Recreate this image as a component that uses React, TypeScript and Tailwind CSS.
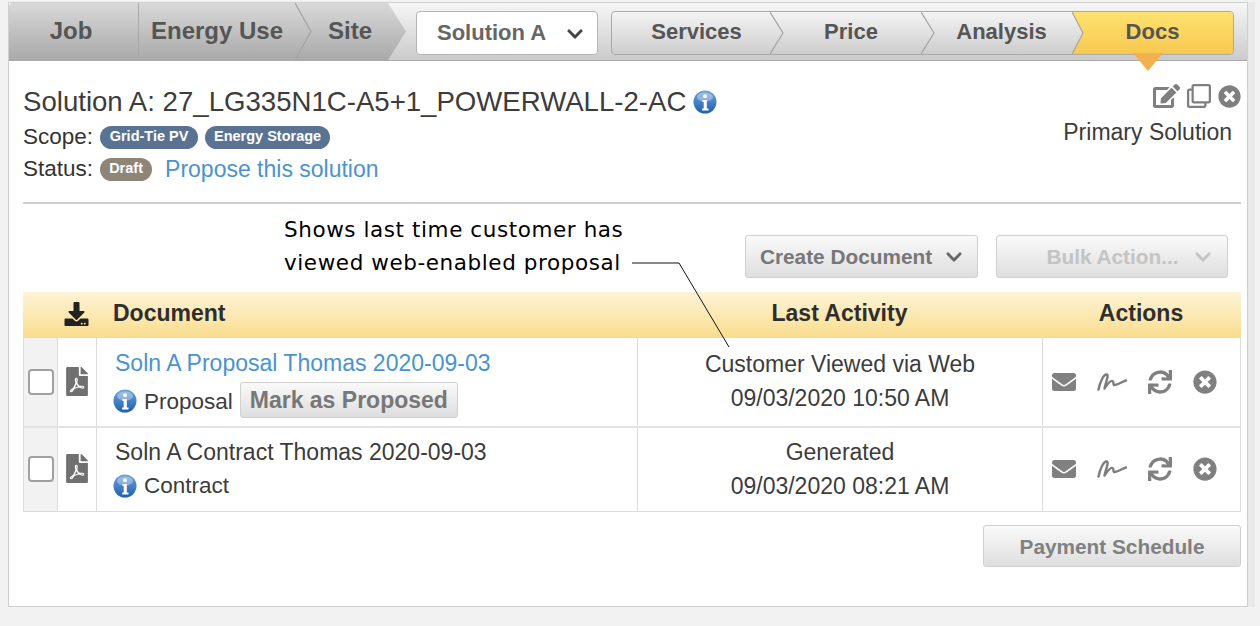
import { FaEdit, FaRegClone, FaTimesCircle, FaEnvelope, FaSync, FaFilePdf, FaDownload, FaChevronDown } from "react-icons/fa";

function Info({ size = 24 }: { size?: number }) {
  return (
    <svg width={size} height={size} viewBox="0 0 24 24" className="shrink-0">
      <defs>
        <linearGradient id="infoG" x1="0" y1="0" x2="0" y2="1">
          <stop offset="0" stopColor="#6fa3dc" />
          <stop offset="1" stopColor="#1f5fb0" />
        </linearGradient>
      </defs>
      <circle cx="12" cy="12" r="11.5" fill="url(#infoG)" />
      <ellipse cx="12" cy="7" rx="8" ry="4.5" fill="#ffffff" opacity="0.35" />
      <circle cx="12" cy="6.2" r="2" fill="#fff" />
      <path d="M9.5 10h4.3v8.6h1.7v2h-6.4v-2h1.6v-6.6H9.5z" fill="#fff" />
    </svg>
  );
}

function Chevron({ color = "#a5a5a5", w = 18 }: { color?: string; w?: number }) {
  return (
    <svg className="absolute top-0 left-full z-10 h-full" width={w} viewBox={`0 0 ${w} 44`} preserveAspectRatio="none">
      <path d={`M0 0L${w - 1} 22L0 44`} fill="none" stroke={color} strokeWidth="1.2" />
    </svg>
  );
}

function Signature() {
  return (
    <svg width="30" height="18" viewBox="0 0 30 18" fill="none">
      <path d="M1.5 16.5C3 9 6.5 1.5 9.5 1.5C12.5 1.5 8.5 10 7.5 15.5C10.5 11 13.5 7 15.5 8C17.5 9 15.5 12 17.5 12C20.5 12 24.5 9 29 7.5" stroke="#7d7d7d" strokeWidth="2.4" strokeLinecap="round" strokeLinejoin="round" />
    </svg>
  );
}

function Actions({ className }: { className: string }) {
  return (
    <div className={"flex items-center pl-[9px] text-[#808080] " + className}>
      <FaEnvelope className="w-6 h-[24px]" />
      <span className="ml-[21px] flex"><Signature /></span>
      <FaSync className="ml-[21px] w-6 h-6" />
      <FaTimesCircle className="ml-[21px] w-6 h-6" />
    </div>
  );
}

function Check() {
  return <div className="w-[26px] h-[26px] rounded-[4px] border-2 border-[#a0a0a0] bg-white" />;
}

function Button({ children, className }: { children: React.ReactNode; className: string }) {
  return (
    <div className={"flex items-center justify-center rounded-[3px] border border-[#d0d0d0] bg-gradient-to-b from-[#fafafa] to-[#dedede] font-bold text-[20.8px] " + className}>
      {children}
    </div>
  );
}

const tabFont = "flex items-center justify-center font-bold text-[#555]";

export default function App() {
  return (
    <div className="w-[1260px] h-[626px] overflow-hidden bg-[#f2f2f2] pt-[2px] pl-[8px] text-[#333] font-['Liberation_Sans',Arial,sans-serif]">
      <div className="w-[1240px] h-[605px] border border-[#cfcfcf] bg-white shadow-[7px_0_0_0_#e9e9e9]">
        {/* nav */}
        <div className="relative flex h-[58px] border-b border-[#a9a9a9] rounded-t-[4px] bg-gradient-to-b from-[#f6f6f6] to-[#cbcbcb]">
          <div className={tabFont + " text-[24px] pb-[2px] w-[130px] pr-[5px] border-r border-[#a8a8a8] rounded-tl-[4px] bg-gradient-to-b from-[#d9d9d9] to-[#a9a9a9]"}>Job</div>
          <div className={tabFont + " text-[24px] pb-[2px] relative w-[156px] bg-gradient-to-b from-[#d9d9d9] to-[#a9a9a9]"}>
            Energy Use
            <Chevron w={17} />
          </div>
          <div className={tabFont + " text-[24px] pb-[2px] w-[111px] pr-[1px] bg-gradient-to-b from-[#d9d9d9] to-[#a9a9a9] [clip-path:polygon(0_0,93px_0,100%_50%,93px_100%,0_100%)]"}>Site</div>
          <div className="ml-[10px] mt-[8px] flex items-center pb-[2px] w-[182px] h-[44px] rounded-[4px] border border-[#b5b5b5] bg-white font-bold text-[22px] text-[#666]">
            <span className="ml-[20px]">Solution A</span>
            <FaChevronDown className="ml-[20px] w-[18px] h-[18px] mt-[3px] text-[#444]" />
          </div>
          <div className="ml-[13px] mt-[8px] flex w-[623px] h-[44px] rounded-[4px] border border-[#aaa] bg-gradient-to-b from-[#f4f4f4] to-[#cdcdcd]">
            <div className={tabFont + " text-[22px] pb-[3px] relative w-[158px] pl-[11px]"}>Services<Chevron w={14} /></div>
            <div className={tabFont + " text-[22px] pb-[3px] relative w-[151px] pl-[11px]"}>Price<Chevron w={14} /></div>
            <div className={tabFont + " text-[22px] pb-[3px] relative w-[151px] pl-[10px]"}>Analysis<Chevron w={12} /></div>
            <div className={tabFont + " text-[22px] pb-[3px] flex-1 rounded-r-[4px] bg-gradient-to-b from-[#fde26f] to-[#f7c84f] [clip-path:polygon(0_0,100%_0,100%_100%,0_100%,11px_50%)]"}>Docs</div>
          </div>
          <svg className="absolute left-[1123px] top-[49px] z-20" width="32" height="20" viewBox="0 0 32 20">
            <path d="M1 1H31L16 19z" fill="#f4b04f" />
          </svg>
        </div>

        <div className="pl-[14px] pr-[6px]">
          {/* solution header */}
          <div className="flex justify-between h-[143px] border-b-2 border-[#cfcfcf]">
            <div>
              <div className="mt-[23px] flex items-center h-[36px] text-[27.6px] text-[#3c3c3c] whitespace-nowrap">
                Solution A: 27_LG335N1C-A5+1_POWERWALL-2-AC
                <span className="ml-[7px] flex"><Info /></span>
              </div>
              <div className="mt-[3px] flex items-center h-[28px] text-[22.5px]">
                Scope:
                <span className="ml-[7px] flex items-center justify-center w-[98px] h-[23px] rounded-full bg-[#5b7393] text-white font-bold text-[14.5px]">Grid-Tie PV</span>
                <span className="ml-[7px] flex items-center justify-center w-[125px] h-[23px] rounded-full bg-[#5b7393] text-white font-bold text-[14.5px]">Energy Storage</span>
              </div>
              <div className="mt-[4px] flex items-center h-[28px] text-[22.5px]">
                Status:
                <span className="ml-[7px] flex items-center justify-center w-[52px] h-[23px] rounded-full bg-[#8f8576] text-white font-bold text-[14.5px]">Draft</span>
                <span className="ml-[13px] text-[23px] text-[#4a93cf]">Propose this solution</span>
              </div>
            </div>
            <div className="flex flex-col items-end pr-[9px]">
              <div className="mt-[23px] flex items-center text-[#7f7f7f]">
                <FaEdit className="w-[27px] h-[24px]" />
                <FaRegClone className="ml-[7px] w-[24px] h-[24px]" />
                <FaTimesCircle className="ml-[7px] mr-[-9px] w-[23px] h-[23px]" />
              </div>
              <div className="mt-[9px] text-[23px] leading-[30px] text-[#3c3c3c]">Primary Solution</div>
            </div>
          </div>

          {/* annotation + buttons */}
          <div className="relative flex h-[88px]">
            <div className="ml-[261px] mt-[9px] text-[21.5px] leading-[33px] text-black font-['DejaVu_Sans',sans-serif] whitespace-nowrap tracking-[0.58px]">
              Shows last time customer has<br />viewed web-enabled proposal
            </div>
            <Button className="absolute left-[722px] top-[31px] w-[233px] h-[43px] text-[#777] gap-[13px]">
              Create Document <FaChevronDown className="w-[18px] h-[18px] text-[#666]" />
            </Button>
            <Button className="absolute left-[973px] top-[31px] w-[232px] h-[43px] pl-[34px] text-[#c4c4c4] gap-[15px]">
              Bulk Action... <FaChevronDown className="w-[18px] h-[18px] text-[#c4c4c4]" />
            </Button>
            <svg className="absolute left-[606px] top-[56px] z-10" width="105" height="90" viewBox="0 0 105 90" fill="none">
              <path d="M3 3H50L100 87" stroke="#111" strokeWidth="1" />
            </svg>
          </div>

          {/* table */}
          <div className="w-[1218px] text-[23px] text-[#3c3c3c]">
            <div className="grid grid-cols-[34px_39px_541px_405px_199px] h-[46px] pb-[3px] items-center bg-gradient-to-b from-[#fdf4d6] to-[#fadc8c] font-bold text-[#2e2e2e]">
              <div />
              <div className="flex justify-center"><FaDownload className="w-[25px] h-[24px] text-[#222]" /></div>
              <div className="pl-[17px]">Document</div>
              <div className="text-center">Last Activity</div>
              <div className="text-center pr-[1px]">Actions</div>
            </div>
            <div className="border-x border-b border-[#dcdcdc]">
              <div className="grid grid-cols-[34px_39px_541px_405px_197px] h-[90px] border-b-2 border-[#e3e3e3]">
                <div className="flex items-center justify-center bg-[#f2f2f2] border-r border-[#dcdcdc] pb-[1px]"><Check /></div>
                <div className="flex items-center justify-center border-r border-[#dcdcdc] pb-[1px]"><FaFilePdf className="w-[22px] h-[29px] text-[#707070]" /></div>
                <div className="pl-[16px] border-r border-[#dcdcdc]">
                  <div className="mt-[8px] ml-[2px] h-[34px] leading-[34px] text-[#4a93cf]">Soln A Proposal Thomas 2020-09-03</div>
                  <div className="flex items-center mt-[2px]">
                    <Info /><span className="ml-[7px] pt-[2px] text-[22.5px]">Proposal</span>
                    <Button className="ml-[7px] mb-[1px] w-[218px] h-[36px] !text-[23px] text-[#777]">Mark as Proposed</Button>
                  </div>
                </div>
                <div className="text-center border-r border-[#dcdcdc] pt-[9px] leading-[34px]">Customer Viewed via Web<br />09/03/2020 10:50 AM</div>
                <Actions className="pb-[1px]" />
              </div>
              <div className="grid grid-cols-[34px_39px_541px_405px_197px] h-[83px]">
                <div className="flex items-center justify-center bg-[#f2f2f2] border-r border-[#dcdcdc] pb-[2px]"><Check /></div>
                <div className="flex items-center justify-center border-r border-[#dcdcdc] pb-[2px]"><FaFilePdf className="w-[22px] h-[29px] text-[#707070]" /></div>
                <div className="pl-[16px] border-r border-[#dcdcdc]">
                  <div className="mt-[7px] ml-[2px] h-[34px] leading-[34px]">Soln A Contract Thomas 2020-09-03</div>
                  <div className="flex items-center h-[34px]"><Info /><span className="ml-[7px] text-[22.5px]">Contract</span></div>
                </div>
                <div className="text-center border-r border-[#dcdcdc] pt-[7px] leading-[34px]">Generated<br />09/03/2020 08:21 AM</div>
                <Actions className="pb-[2px]" />
              </div>
            </div>
          </div>

          <div className="flex justify-end mt-[13px] w-[1218px]">
            <Button className="w-[258px] h-[42px] pt-[2px] text-[#808080]">Payment Schedule</Button>
          </div>
        </div>
      </div>
    </div>
  );
}
